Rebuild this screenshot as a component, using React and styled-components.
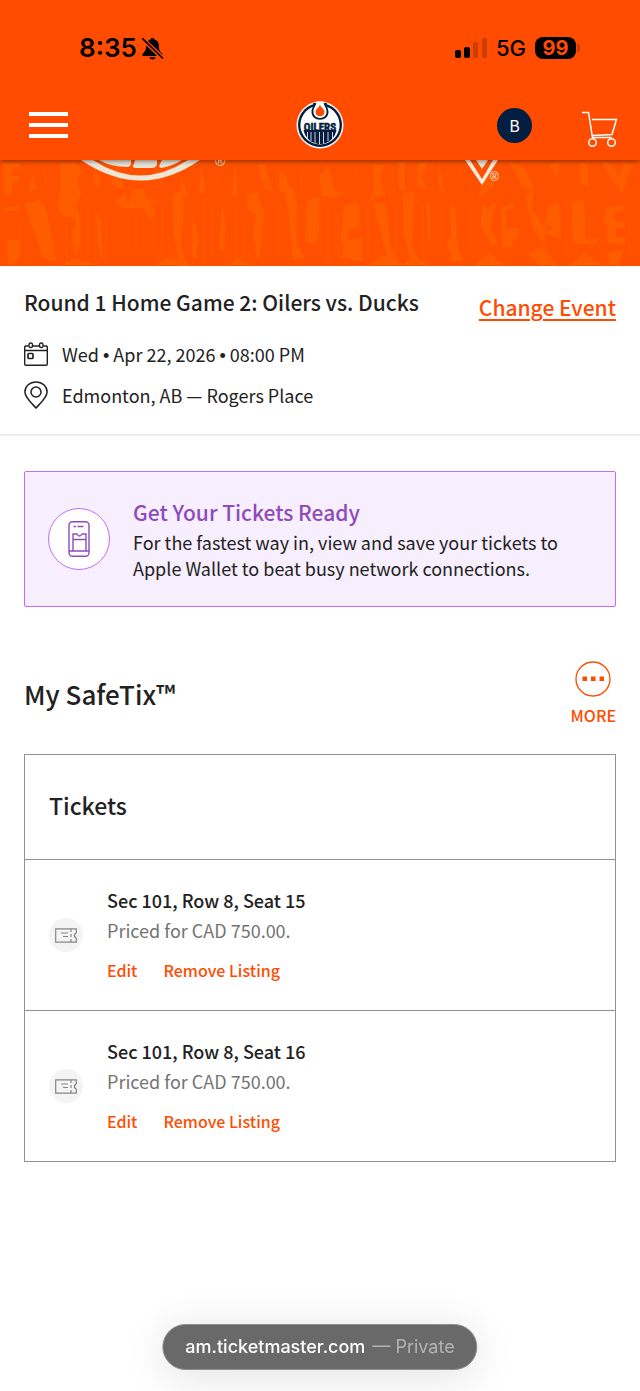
import styled, { createGlobalStyle } from 'styled-components';

const GlobalStyle = createGlobalStyle`
  * {
    box-sizing: border-box;
  }

  body {
    margin: 0;
    background-color: #fff;
    color: #222;
    font-family: "Noto Sans CJK SC", "Noto Sans", sans-serif;
  }

  h1, h2, h3, p, ul {
    margin: 0;
    padding: 0;
  }

  button {
    padding: 0;
    border: none;
    background: transparent;
    font-family: inherit;
    cursor: pointer;
  }

  svg {
    display: block;
  }
`;

const Page = styled.div`
  min-height: 100vh;
  display: flex;
  flex-direction: column;
  padding-bottom: 100px;
`;

const Header = styled.header`
  position: relative;
  z-index: 1;
  background-color: #ff4c00;
  box-shadow: 0 1px 5px rgba(0, 0, 0, 0.5);
`;

const StatusBar = styled.div`
  display: flex;
  justify-content: space-between;
  align-items: center;
  height: 92px;
  padding: 4px 60px 0 79px;
  color: #000;
  font-family: Inter, sans-serif;
`;

const StatusGroup = styled.div`
  display: flex;
  align-items: center;
  gap: ${({ $gap }) => $gap}px;
`;

const Clock = styled.span`
  font-size: 26px;
  line-height: 32px;
  font-weight: 600;
`;

const Network = styled.span`
  font-size: 22px;
  line-height: 32px;
  font-weight: 500;
`;

const Battery = styled.span`
  display: flex;
  align-items: center;
  gap: 1px;

  &::after {
    content: '';
    width: 3px;
    height: 8px;
    border-radius: 0 3px 3px 0;
    background-color: #c43b00;
  }
`;

const BatteryLevel = styled.span`
  display: block;
  width: 41px;
  border-radius: 8px;
  background-color: #000;
  color: #ff4c00;
  font-size: 20px;
  line-height: 22px;
  font-weight: 700;
  text-align: center;
`;

const NavBar = styled.nav`
  display: grid;
  grid-template-columns: 1fr auto 1fr;
  align-items: center;
  height: 68px;
  padding: 0 22px 2px;
`;

const MenuButton = styled.button`
  display: flex;
  flex-direction: column;
  gap: 7px;
  width: 39px;
  margin-left: 7px;
`;

const MenuLine = styled.span`
  display: block;
  width: 100%;
  height: 4px;
  background-color: #fff;
`;

const NavActions = styled.div`
  display: flex;
  justify-content: flex-end;
  align-items: center;
  gap: 50px;
`;

const Avatar = styled.button`
  width: 35px;
  height: 35px;
  border-radius: 50%;
  background-color: #041e42;
  color: #fff;
  font-size: 16px;
  line-height: 35px;
`;

const CartButton = styled.button`
  padding-top: 8px;
`;

const Banner = styled.div`
  height: 106px;
  background-color: #ff5000;
  overflow: hidden;
`;

const EventInfo = styled.section`
  display: flex;
  justify-content: space-between;
  align-items: flex-start;
  padding: 20px 24px 23px;
  border-bottom: 2px solid #ebebeb;
`;

const EventDetails = styled.div`
  display: flex;
  flex-direction: column;
`;

const EventTitle = styled.h1`
  font-size: 21px;
  line-height: 32px;
  font-weight: 500;
`;

const EventLine = styled.div`
  display: flex;
  align-items: center;
  gap: 14px;
  margin-top: ${({ $first }) => ($first ? '20px' : '9px')};
  font-size: 18px;
  line-height: 32px;
`;

const Bullet = styled.span`
  font-family: "Liberation Sans", sans-serif;
  font-size: 18px;
  line-height: 1;
`;

const ChangeLink = styled.a`
  margin-top: 5px;
  color: #ff4c00;
  font-size: 21px;
  line-height: 32px;
  font-weight: 500;
  text-decoration: underline;
  text-decoration-thickness: 2px;
  text-underline-offset: 3px;
`;

const Notice = styled.section`
  display: flex;
  align-items: center;
  gap: 23px;
  margin: 35px 24px 0;
  padding: 24px 23px 25px;
  border: 1px solid #bf6cff;
  border-radius: 2px;
  background-color: #f7eefe;
`;

const NoticeIcon = styled.div`
  display: flex;
  align-items: center;
  justify-content: center;
  flex: none;
  width: 62px;
  height: 62px;
  border: 1px solid #bf6cff;
  border-radius: 50%;
  background-color: #fff;
`;

const NoticeTitle = styled.h2`
  padding-bottom: 1px;
  color: #8d4bbb;
  font-size: 21px;
  line-height: 32px;
  font-weight: 500;
`;

const NoticeText = styled.p`
  font-size: 18px;
  line-height: 26px;
`;

const SectionHeader = styled.div`
  display: flex;
  justify-content: space-between;
  align-items: center;
  margin: 54px 24px 28px;
`;

const SectionTitle = styled.h2`
  font-size: 26px;
  line-height: 36px;
  font-weight: 500;
`;

const MoreButton = styled.button`
  display: flex;
  flex-direction: column;
  align-items: center;
  gap: 7px;
  color: #ff4c00;
  font-size: 16px;
  line-height: 22px;
  font-weight: 500;
`;

const TicketCard = styled.section`
  margin: 0 24px;
  border: 1px solid #929292;
`;

const CardTitle = styled.h3`
  padding: 32px 24px 36px;
  font-size: 23px;
  line-height: 36px;
  font-weight: 500;
`;

const TicketList = styled.ul`
  list-style: none;
`;

const TicketRow = styled.li`
  display: flex;
  align-items: center;
  gap: 24px;
  padding: 24px;
  border-top: 1px solid #929292;
`;

const TicketIcon = styled.div`
  display: flex;
  align-items: center;
  justify-content: center;
  width: 34px;
  height: 34px;
  border-radius: 50%;
  background-color: #f4f4f4;
`;

const Seat = styled.p`
  font-size: 18px;
  line-height: 32px;
  font-weight: 500;
`;

const Price = styled.p`
  color: #747474;
  font-size: 18px;
  line-height: 28px;
`;

const Actions = styled.div`
  display: flex;
  gap: 26px;
  margin-top: 10px;
`;

const ActionButton = styled.button`
  color: #ff4c00;
  font-size: 16px;
  line-height: 32px;
  font-weight: 500;
`;

const AddressBar = styled.div`
  position: fixed;
  bottom: 21px;
  left: 50%;
  transform: translateX(-50%);
  display: flex;
  gap: 7px;
  padding: 6px 22px;
  border: 1px solid #909090;
  border-radius: 23px;
  background-color: #696969;
  box-shadow: 0 6px 44px rgba(0, 0, 0, 0.12);
  color: #fff;
  font-family: Inter, sans-serif;
  font-size: 18px;
  line-height: 32px;
  font-weight: 500;
  white-space: nowrap;
`;

const Mode = styled.span`
  color: #b4b4b4;
  font-weight: 400;
`;

const tickets = [
  { id: 15, seat: 'Sec 101, Row 8, Seat 15', price: 'Priced for CAD 750.00.' },
  { id: 16, seat: 'Sec 101, Row 8, Seat 16', price: 'Priced for CAD 750.00.' },
];

function MutedBell() {
  return (
    <svg width="22" height="23" viewBox="0 0 22 23" aria-hidden="true">
      <path d="M10.5 1c-1.200 0-2 .7-2.300 1.700C5.400 3.500 4.100 5.800 4.100 8.700c0 4-.9 5.400-2.400 7-.8.900-1.400 1.300-1.400 2.100 0 .8.600 1.200 1.500 1.200h17.400c.9 0 1.500-.4 1.500-1.200 0-.8-.6-1.200-1.400-2.100-1.500-1.600-2.400-3-2.400-7 0-2.900-1.300-5.200-4.100-6C12.500 1.700 11.700 1 10.500 1z" />
      <path d="M7.400 20.200h6.200c-.4 1.300-1.500 2.300-3.100 2.300s-2.700-1-3.100-2.300z" />
      <path d="M0 1.500L21 21.500" stroke="#ff4c00" strokeWidth="4.500" />
      <path d="M.8 1.800L20.500 21" stroke="#000" strokeWidth="1.700" strokeLinecap="round" />
    </svg>
  );
}

function Signal() {
  return (
    <svg width="32" height="20" viewBox="0 0 32 20" aria-hidden="true">
      <rect x="0" y="12" width="6" height="8" rx="2" />
      <rect x="9" y="9" width="6" height="11" rx="2" />
      <rect x="18" y="4" width="5" height="16" rx="2" fill="#cc3d00" />
      <rect x="27" y="0" width="5" height="20" rx="2" fill="#cc3d00" />
    </svg>
  );
}

function TeamLogo() {
  return (
    <svg width="48" height="48" viewBox="0 0 48 48" role="img" aria-label="Oilers">
      <circle cx="24" cy="24" r="23.500" fill="#fff" />
      <circle cx="24" cy="24" r="22" fill="#041e42" />
      <circle cx="24" cy="24" r="19.600" fill="#fff" />
      <path d="M7.500 29h33c-1 5-4.200 9.700-9 12.200-4.700 2.400-10.300 2.400-15 0C11.700 38.700 8.500 34 7.500 29z" fill="#041e42" />
      <path d="M11.500 31v6M15 31v9M19 31v11M23.500 31v12M27.500 31v11.500M32 31v9M36.500 31v6" stroke="#fff" strokeWidth=".8" />
      <path d="M17 2c1.400 3-1.500 5-1.500 8.700 0 4.800 3.600 8 8.500 8s8.500-3.200 8.500-8C32.500 7 29.600 5 31 2z" fill="#041e42" />
      <path d="M20 .6c1.400 3.200-2.600 5.700-2.600 9.900 0 3.900 2.800 6.400 6.600 6.400s6.600-2.500 6.600-6.400C30.600 6.300 26.600 3.800 28 .6z" fill="#fff" />
      <path d="M24 3c.2 2.900-4.500 4.500-4.500 8 0 2.700 1.900 4.300 4.500 4.300s4.500-1.600 4.500-4.300c0-3.500-4.700-5.100-4.500-8z" fill="#ff4c00" />
      <text x="24" y="30" textAnchor="middle" fontFamily="Liberation Sans Narrow, Roboto Condensed, DejaVu Sans Condensed, sans-serif" fontSize="11" fontWeight="700" fill="#041e42" stroke="#041e42" strokeWidth=".5">
        OILERS
      </text>
    </svg>
  );
}

function CartIcon() {
  return (
    <svg width="36" height="37" viewBox="0 0 36 37" fill="none" stroke="#fff" strokeWidth="1.500" aria-hidden="true">
      <path d="M0 1.500h6.500l4 25h19" />
      <path d="M10 8.500h24.500l-4.500 15-19.500 1" />
      <circle cx="10.500" cy="31.500" r="3.800" />
      <circle cx="29.500" cy="31.500" r="3.800" />
    </svg>
  );
}

// weathered poster texture with the lower edges of the two crests
function BannerArt() {
  return (
    <svg width="100%" height="106" viewBox="0 0 640 106" preserveAspectRatio="xMidYMin slice" aria-hidden="true">
      <g fill="#ff6000" opacity=".8">
        <path d="M3 3h17v6h-8v7h7v6h-7v12H4zM29 30l3-14 5 13zM60 3h16l5 7-4 13 4 9-3 12-20 4 3-20zM94 4l8 23-8-3zM117 3l7 26-13-4zM132 30l12-2 2 10 12 3-29 3zM181 16l7 21h-8zM201 5l5 28h-7zM235 3l3 33h-6zM257 4h7l9 28-8-4zM278 12l8 2 3 18h-9z" />
        <path d="M3 49l17-4 1 4-17 3zM24 44l16-5 5 7 8 36 3 20-13-4-14-41zM7 80l13-2-2 24-10 3zM58 47l18-2 5 16v21l-5 15-4-18 4-20-14-4zM96 52l5 9 2 39-5-15zM114 43l12-11 1 10 18-3 14 3-10 3 8 4-7 12-7-13-18 1zM173 34l8-2 3 14-3 39 7 25-9-5-6-40zM193 53l6 27-3 18-4-2zM222 45l4 19-2 27-5-4zM247 34l10-2 7 22-3 35-4 10-4-24 3-20-9-7zM284 29l8-2 5 20v39l8 12-12 2-4-43z" />
        <path d="M307 41l12-5v38l-6 11-8-4z" />
        <path d="M320 15l8-9 7 25 10 2-10 5-14-3zM373 5h12l-5 16 6 14-15 4 3-12zM398 2h7v28h-6zM418 3l11-1-8 15 7 14-11-6zM439 2l5 31-6-9zM485 17l14-3-8 15-13 8zM510 2l15 7 10 22-12-3zM549 4l11-2-3 17zM579 2l8 2 2 24-8-5zM602 2l11 2 5 12 6-13 8 3-10 27-12-15z" />
        <path d="M344 46l15-4v25l-11 4 1 10 13-4v25l-21-5 3-10-3-6zM374 43h12l5 44 9 18-12-6-9-32zM403 35l12-4-3 58 8 12-8 4-9-33zM426 40l4 5 1 38-3-7zM450 47l5-2 3 44 6 11-12 2-5-19 4-8zM482 44l6 5 8-7-5 27 9 18-9-2-10-20zM501 48l13-5v7h-8v18h13v6l-10 15-7-2zM525 36l9-7-2 21 14 20-3 14-9-12zM548 46l11-5 2 38-14-5 6-6-8-5zM572 42l12-2 2 39 12-1-1 6h-24zM608 48l17-4-1 6-10 3v9h11v6h-9v10h10l-2 7-18-3 2-13-5-9z" />
        <path d="M62 105l11-7 24 7zM156 105l12-8 23 8zM230 105l8-8 12 8zM370 105l13-10 21 10zM402 105q12-12 26 0zM475 105l15-12 13 12zM528 94l14-7 16 18h-19zM570 105l14-12 18 12zM608 92l15-3-4 16h-10z" />
      </g>
      <g stroke="#ff6000" opacity=".4" fill="none" strokeWidth="1.500">
        <path d="M20 65v36M30 51l-5 48M67 62v37M88 43v57M107 55v47M136 55v34M155 50v39M163 47v50M204 37v66M212 48v48M236 46v53M244 60v38M278 46v50M328 48v52M338 52v46M368 45v55M396 45v50M423 46v51M441 44v49M469 45v44M514 74v20M545 60v38M567 45v52M590 55v38M629 53v43M17 21l7-15M44 7l2 21M155 6l8 25M217 9l4 20M301 6v28M358 7l-7 25M393 9v23M460 8l3 22" />
      </g>
      <path d="M81 0h12q47 31 95 0h12q-59 41-119 0z" fill="#eee5d6" />
      <path d="M99 0h32q1 6-3 7Q110 7 99 0zM135 0h22q1 8-5 8h-17q-4-1-1-4zM162 0h20q-9 6-21 8-3-1-1-4z" fill="#e9e2d5" />
      <path d="M465 0h5l12 19 11-19h5l-16 25z" fill="#f4eadc" />
      <path d="M476 0h12l-6 9z" fill="#eee5d6" />
      <g fill="#f4eadc" fontFamily="Liberation Sans, sans-serif">
        <text x="215" y="6" fontSize="14">®</text>
        <text x="490" y="21" fontSize="12">®</text>
      </g>
    </svg>
  );
}

function CalendarIcon() {
  return (
    <svg width="24" height="25" viewBox="0 0 24 25" fill="none" stroke="#222" strokeWidth="1.400" aria-hidden="true">
      <path d="M4.500 4H1.800Q.7 4 .7 5v17q0 1.300 1.100 1.300h20.400q1.100 0 1.100-1.300V5q0-1-1.100-1h-2.700M9 4h6M.7 8.500h22.600" />
      <rect x="5" y="1" width="3.500" height="4.500" rx="1.600" />
      <rect x="15.500" y="1" width="3.500" height="4.500" rx="1.600" />
      <rect x="4" y="11.500" width="5" height="5" rx="1" strokeWidth="1.700" />
    </svg>
  );
}

function PinIcon() {
  return (
    <svg width="24" height="28" viewBox="0 0 24 28" fill="none" stroke="#222" strokeWidth="1.500" aria-hidden="true">
      <path d="M12 27C8 22.500.9 16.500.9 11 .9 5 5.900.9 12 .9S23.100 5 23.100 11c0 5.500-7.100 11.500-11.100 16z" />
      <circle cx="12" cy="11" r="5" />
    </svg>
  );
}

function PhoneTicketIcon() {
  return (
    <svg width="22" height="36" viewBox="0 0 22 36" fill="none" stroke="#8d4bbb" strokeWidth="1.400" aria-hidden="true">
      <rect x="1" y=".8" width="20" height="34.400" rx="3.500" />
      <path d="M1 30h20M5 30V13h4q2.500 4 5 0h4v17M5 18.500h13M5.500 5.500h2.500M9.500 5.500h6" />
    </svg>
  );
}

function MoreIcon() {
  return (
    <svg width="36" height="36" viewBox="0 0 36 36" aria-hidden="true">
      <circle cx="18" cy="18" r="17" fill="none" stroke="#ff4c00" strokeWidth="1.300" />
      <path d="M7.500 15.500h4.500v4.500H7.500zM16 15.500h4.500v4.500H16zM24.500 15.500H29v4.500h-4.500z" fill="#ff4c00" />
    </svg>
  );
}

function StubIcon() {
  return (
    <svg width="22" height="15" viewBox="0 0 22 15" fill="none" stroke="#858585" strokeWidth="1.200" aria-hidden="true">
      <path d="M.7.800h20.600v4q-4 2.700 0 5.400v4H.7z" />
      <path d="M6 5h7M8 8.500h5" />
      <path d="M16 1v13" strokeDasharray="3 2" />
    </svg>
  );
}

function Ticket({ seat, price }) {
  return (
    <TicketRow>
      <TicketIcon>
        <StubIcon />
      </TicketIcon>
      <div>
        <Seat>{seat}</Seat>
        <Price>{price}</Price>
        <Actions>
          <ActionButton type="button">Edit</ActionButton>
          <ActionButton type="button">Remove Listing</ActionButton>
        </Actions>
      </div>
    </TicketRow>
  );
}

export default function App() {
  return (
    <Page>
      <GlobalStyle />
      <Header>
        <StatusBar>
          <StatusGroup $gap={5}>
            <Clock>8:35</Clock>
            <MutedBell />
          </StatusGroup>
          <StatusGroup $gap={9}>
            <Signal />
            <Network>5G</Network>
            <Battery>
              <BatteryLevel>99</BatteryLevel>
            </Battery>
          </StatusGroup>
        </StatusBar>
        <NavBar>
          <MenuButton type="button" aria-label="Menu">
            <MenuLine />
            <MenuLine />
            <MenuLine />
          </MenuButton>
          <TeamLogo />
          <NavActions>
            <Avatar type="button">B</Avatar>
            <CartButton type="button" aria-label="Cart">
              <CartIcon />
            </CartButton>
          </NavActions>
        </NavBar>
      </Header>

      <Banner>
        <BannerArt />
      </Banner>

      <main>
        <EventInfo>
          <EventDetails>
            <EventTitle>Round 1 Home Game 2: Oilers vs. Ducks</EventTitle>
            <EventLine $first>
              <CalendarIcon />
              <p>
                Wed <Bullet>•</Bullet> Apr 22, 2026 <Bullet>•</Bullet> 08:00 PM
              </p>
            </EventLine>
            <EventLine>
              <PinIcon />
              <p>Edmonton, AB — Rogers Place</p>
            </EventLine>
          </EventDetails>
          <ChangeLink href="#">Change Event</ChangeLink>
        </EventInfo>

        <Notice>
          <NoticeIcon>
            <PhoneTicketIcon />
          </NoticeIcon>
          <div>
            <NoticeTitle>Get Your Tickets Ready</NoticeTitle>
            <NoticeText>
              For the fastest way in, view and save your tickets to Apple Wallet to beat busy network connections.
            </NoticeText>
          </div>
        </Notice>

        <SectionHeader>
          <SectionTitle>My SafeTix™</SectionTitle>
          <MoreButton type="button">
            <MoreIcon />
            MORE
          </MoreButton>
        </SectionHeader>

        <TicketCard>
          <CardTitle>Tickets</CardTitle>
          <TicketList>
            {tickets.map((ticket) => (
              <Ticket key={ticket.id} seat={ticket.seat} price={ticket.price} />
            ))}
          </TicketList>
        </TicketCard>
      </main>

      <AddressBar>
        <span>am.ticketmaster.com</span>
        <Mode>— Private</Mode>
      </AddressBar>
    </Page>
  );
}
